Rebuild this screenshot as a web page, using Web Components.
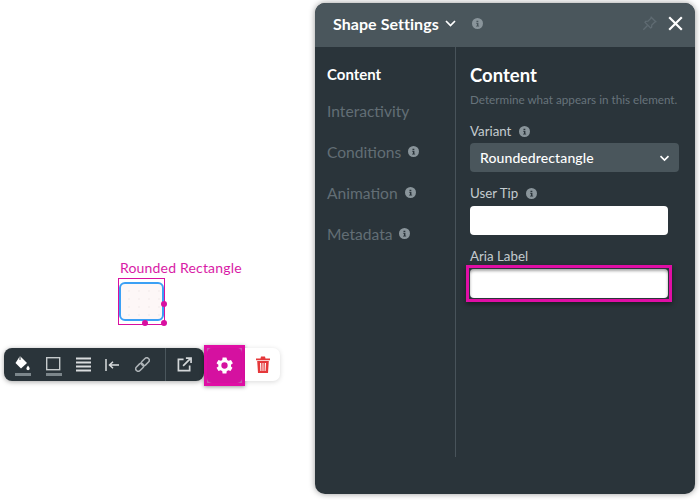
<!DOCTYPE html>
<html><head><meta charset="utf-8">
<style>
html,body{margin:0;padding:0;background:#fff;overflow:hidden}
body{width:700px;height:500px;position:relative;font-family:Lato,"Open Sans",sans-serif}
</style></head><body>
<canvas-shape></canvas-shape>
<shape-toolbar></shape-toolbar>
<settings-panel>
  <side-item slot="nav" active>Content</side-item>
  <side-item slot="nav" style="margin-top:16.5px">Interactivity</side-item>
  <side-item slot="nav" info style="margin-top:21px">Conditions</side-item>
  <side-item slot="nav" info style="margin-top:21px">Animation</side-item>
  <side-item slot="nav" info style="margin-top:21px">Metadata</side-item>
</settings-panel>
<script>
const INFO=(s,c='#8a959b',f='#2a343a')=>`<svg width="${s}" height="${s}" viewBox="0 0 12 12" style="flex:none"><circle cx="6" cy="6" r="6" fill="${c}"/><path d="M4.900 3h2v1.400h-2zM4.600 5.200h2.400v3.200h.8v1H4.400v-1h1V6.200h-.8z" fill="${f}"/></svg>`;
class Base extends HTMLElement{
  render(html){this.attachShadow({mode:'open'}).innerHTML=html}
}
customElements.define('side-item',class extends Base{connectedCallback(){
  if(this.shadowRoot)return;
  const a=this.hasAttribute('active');
  this.render(`<style>:host{display:flex;align-items:center;gap:7px;height:20px;font-size:${a?15:15.6}px;font-weight:${a?700:400};color:${a?'#fff':'#626e75'}}</style><slot></slot>${this.hasAttribute('info')?INFO(11):''}`);
}});
customElements.define('field-label',class extends Base{connectedCallback(){
  if(this.shadowRoot)return;
  this.render(`<style>:host{display:flex;align-items:center;gap:8px;height:18px;font-size:13.3px;color:#c4cbcf}</style><slot></slot>${this.hasAttribute('info')?INFO(11):''}`);
}});
customElements.define('text-box',class extends Base{connectedCallback(){
  if(this.shadowRoot)return;
  this.render(`<style>:host{display:block;position:relative;width:198px;height:29px;background:#fff;border-radius:4px}
  :host([focus]){box-shadow:inset 0 2px 3px rgba(0,0,0,.35)}
  :host([focus])::after{content:"";position:absolute;inset:-4px;border:3px solid #e00ea5;box-shadow:0 2px 5px rgba(0,0,0,.45);pointer-events:none}
  </style>`);
}});
customElements.define('select-box',class extends Base{connectedCallback(){
  if(this.shadowRoot)return;
  this.render(`<style>:host{display:flex;align-items:center;justify-content:space-between;box-sizing:border-box;width:209px;height:29px;background:#4a565c;border-radius:4px;padding:0 9px 1px 10px;color:#fff;font-size:14px;font-weight:500;letter-spacing:.1px}
  svg{margin-top:2px}</style><slot></slot><svg width="11" height="7" viewBox="0 0 11 7"><path d="M1.500 1.200 5.500 5 9.500 1.200" fill="none" stroke="#fff" stroke-width="1.700"/></svg>`);
}});
customElements.define('settings-panel',class extends Base{connectedCallback(){
  if(this.shadowRoot)return;
  this.render(`<style>
  :host{position:absolute;left:315px;top:3px;width:380px;height:491px;display:flex;flex-direction:column;background:#2a343a;border-radius:10px;box-shadow:0 0 6px rgba(0,0,0,.4);overflow:hidden;color:#fff}
  header{height:44px;flex:none;background:#4a565c;display:flex;align-items:center;padding:0 12px 3px 18px;font-size:16px;font-weight:700;box-sizing:border-box}
  header .t{letter-spacing:.05px}
  header .sp{flex:1}
  .body{flex:1;display:flex;min-height:0}
  nav{width:141px;flex:none;box-sizing:border-box;padding:17px 0 0 12px;display:flex;flex-direction:column;align-self:stretch;height:410px;border-right:1px solid #48535a}
  main{flex:1;padding:16px 0 0 14px;display:flex;flex-direction:column;align-items:flex-start}
  h2{margin:0;font-size:18.5px;font-weight:700;line-height:24px;color:#fff}
  p{margin:5px 0 0;font-size:11.7px;line-height:15px;color:#67737a;white-space:nowrap}
  </style>
  <header><span class="t">Shape Settings</span>
   <svg width="11" height="7" viewBox="0 0 11 7" style="margin-left:6px"><path d="M1 1 5.500 5.500 10 1" fill="none" stroke="#fff" stroke-width="1.700"/></svg>
   <span style="margin-left:16px;display:flex">${INFO(11,'#8a959b','#4a565c')}</span><span class="sp"></span>
   <svg width="15" height="15" viewBox="0 0 15 15" style="margin-right:11px"><path d="M9.200 1.200 13.800 5.800 12.600 6.200 9.800 9 9.600 11.400 8.600 12 3 6.400 3.600 5.400 6 5.200 8.800 2.400ZM5.300 9.700 1.300 13.700" fill="none" stroke="#5f6b72" stroke-width="1.300"/></svg>
   <svg width="15" height="15" viewBox="0 0 15 15"><path d="M1.200 1.200 13.800 13.800M13.800 1.200 1.200 13.800" stroke="#fff" stroke-width="2.200"/></svg>
  </header>
  <div class="body"><nav><slot name="nav"></slot></nav>
  <main><h2>Content</h2><p>Determine what appears in this element.</p>
   <field-label info style="margin-top:15px">Variant</field-label>
   <select-box style="margin-top:3px">Roundedrectangle</select-box>
   <field-label info style="margin-top:12px">User Tip</field-label>
   <text-box style="margin-top:4px"></text-box>
   <field-label style="margin-top:12px">Aria Label</field-label>
   <text-box focus style="margin-top:4px"></text-box>
  </main></div>`);
}});
customElements.define('canvas-shape',class extends Base{connectedCallback(){
  if(this.shadowRoot)return;
  this.render(`<style>
  :host{position:absolute;left:118px;top:259px;width:130px;height:70px;display:block}
  .lbl{position:absolute;left:2px;top:0;font-size:14px;line-height:17px;color:#d81ba6;white-space:nowrap;letter-spacing:.18px}
  .sel{position:absolute;left:0;top:19px;width:47px;height:47px;box-sizing:border-box;border:1px solid #d80fa0}
  .in{position:absolute;left:0;top:3px;width:45px;height:39px;box-sizing:border-box;border:2px solid #3ba0f5;border-radius:6px;background:#fdf7f7 radial-gradient(circle,#f6eeee .6px,transparent 1px) 3px 3px/10px 8px}
  i{position:absolute;width:6px;height:6px;border-radius:50%;background:#d80fa0}
  </style><div class="lbl">Rounded Rectangle</div><div class="sel"><div class="in"></div>
  <i style="left:42px;top:22px"></i><i style="left:23px;top:41px"></i><i style="left:42px;top:41px"></i></div>`);
}});
customElements.define('shape-toolbar',class extends Base{connectedCallback(){
  if(this.shadowRoot)return;
  this.render(`<style>
  :host{position:absolute;left:4px;top:345px;display:flex;align-items:flex-start}
  .bar{margin-top:3px;width:200px;height:33px;background:#2a343a;border-radius:8px;display:flex;align-items:center;box-shadow:0 1px 5px rgba(0,0,0,.35);box-sizing:border-box;padding-left:10px}
  .bar svg{flex:none;display:block}
  .div{width:1px;height:33px;background:#4a565c;margin-left:15px}
  .gear{width:41px;height:41px;box-sizing:border-box;border:3px solid #e00ea5;background:#c65aae;box-shadow:0 1px 4px rgba(0,0,0,.4)}
  .gear div{width:100%;height:100%;border-radius:5px;background:#d511a0;display:flex;align-items:center;justify-content:center}
  .del{margin-top:3px;width:35px;height:33px;background:#fff;border-radius:0 7px 7px 0;display:flex;align-items:center;justify-content:center;box-shadow:0 1px 5px rgba(0,0,0,.15)}
  </style>
  <div class="bar">
   <svg width="17" height="24" viewBox="0 0 17 24"><path d="M6 3 13 10 7 15.500 1.500 10Z" fill="#fff"/><path d="M6 3V7" stroke="#2a343a"/><path d="M14 12.500c1 1.500 1.700 2.200 1.700 3a1.600 1.600 0 0 1-3.300 0c0-.8.700-1.500 1.600-3Z" fill="#fff"/><rect x="1" y="20" width="16" height="3" fill="#7c868b"/></svg>
   <svg width="17" height="24" viewBox="0 0 17 24" style="margin-left:14px"><rect x="1.700" y="4.700" width="13" height="12" fill="none" stroke="#c5cacc" stroke-width="1.400"/><rect x="1" y="20" width="16" height="3" fill="#7c868b"/></svg>
   <svg width="15" height="15" viewBox="0 0 15 15" style="margin-left:14px"><path d="M0 1.500H15M0 5.500H15M0 9.500H15M0 13.500H15" stroke="#d9dcde" stroke-width="2.200"/></svg>
   <svg width="14" height="14" viewBox="0 0 14 14" style="margin-left:14px"><path d="M1 1V13" stroke="#d9dcde" stroke-width="1.500"/><path d="M14 7H5M8 3.800 4.500 7 8 10.200" fill="none" stroke="#d9dcde" stroke-width="1.500"/></svg>
   <svg width="15" height="15" viewBox="0 0 15 15" style="margin-left:16px"><g fill="none" stroke="#aeb4b8" stroke-width="1.500" transform="rotate(-45 7.500 7.500)"><rect x="-1" y="5" width="9" height="5" rx="2.500"/><rect x="7" y="5" width="9" height="5" rx="2.500"/></g></svg>
   <div class="div"></div>
   <svg width="15" height="15" viewBox="0 0 16 16" style="margin-left:11px"><path d="M7 2.500H1.500V14.500H13.500V9" fill="none" stroke="#d3d7d9" stroke-width="1.800"/><path d="M6.500 9.500 14 2M9.500 1.200H15V6.500" fill="none" stroke="#d3d7d9" stroke-width="1.800"/></svg>
  </div>
  <div class="gear"><div><svg width="21" height="21" viewBox="0 0 24 24"><path fill="#fff" fill-rule="evenodd" d="M19.400 13a7.500 7.500 0 0 0 0-2l2.200-1.700-2.200-3.700-2.600 1a7.500 7.500 0 0 0-1.700-1L14.200 2.800H9.800l-.4 2.800a7.500 7.500 0 0 0-1.700 1l-2.600-1-2.200 3.700L5 11a7.500 7.500 0 0 0 0 2l-2.100 1.700 2.200 3.700 2.600-1c.5.400 1.100.7 1.700 1l.4 2.800h4.400l.4-2.800c.6-.3 1.200-.6 1.700-1l2.600 1 2.200-3.700ZM12 15.600a3.600 3.600 0 1 1 0-7.200 3.600 3.600 0 0 1 0 7.200Z"/></svg></div></div>
  <div class="del"><svg width="14" height="17" viewBox="0 0 14 17"><path d="M0 2.500H14V4.200H0ZM4.500 2.500 5 .5H9L9.500 2.500Z" fill="#e5383b"/><path fill="#e5383b" fill-rule="evenodd" d="M1.200 5H12.800L12 17H2ZM4 7 4.400 15H5.400L5.200 7ZM6.500 7V15H7.500V7ZM8.800 7 8.600 15H9.600L10 7Z"/></svg></div>`);
}});
</script>
</body></html>
